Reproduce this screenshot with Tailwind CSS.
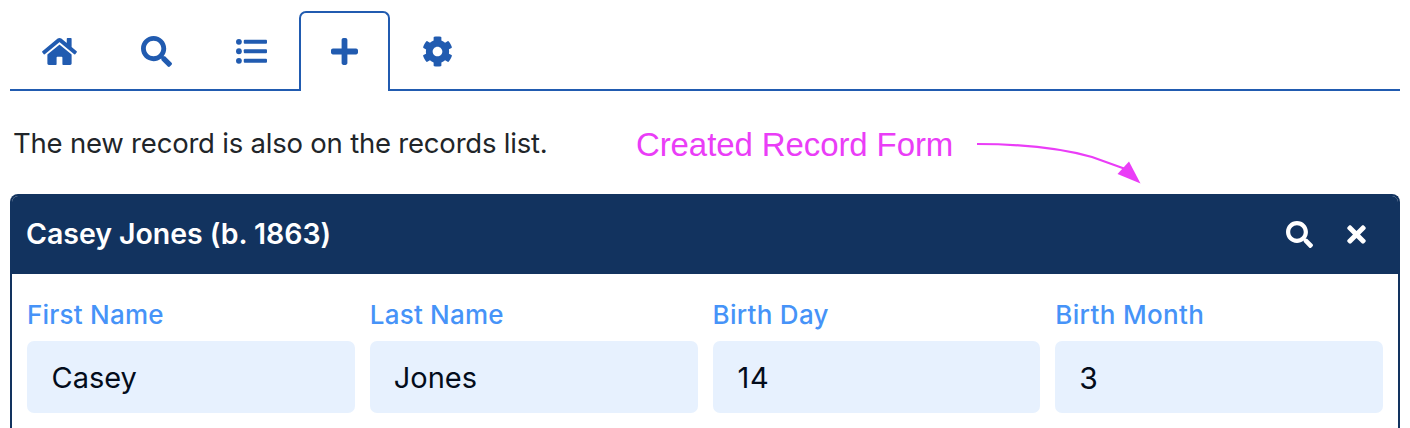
<!DOCTYPE html>
<html lang="en">
<head>
<meta charset="utf-8">
<title>Records</title>
<script src="https://cdn.jsdelivr.net/npm/@tailwindcss/browser@4"></script>
</head>
<body class="relative h-[428px] overflow-hidden bg-white px-[10px] pt-[11px] font-['Inter',sans-serif]">
<nav class="flex h-20 text-[#215bb0]">
  <a class="flex items-center border-b-2 border-current px-8 pt-[2px]"><svg class="h-[31px] w-[35px]" viewBox="0 0 576 512" fill="currentColor"><path d="M488 312.7V456c0 13.3-10.7 24-24 24H348c-6.6 0-12-5.4-12-12V356c0-6.6-5.4-12-12-12h-72c-6.6 0-12 5.4-12 12v112c0 6.6-5.4 12-12 12H112c-13.3 0-24-10.7-24-24V312.7c0-3.6 1.6-7 4.400-9.300l188-154.800c4.400-3.600 10.800-3.600 15.300 0l188 154.800c2.700 2.300 4.300 5.700 4.300 9.300zm83.600-60.900L488 182.900V44.400c0-6.600-5.400-12-12-12h-56c-6.600 0-12 5.400-12 12V117l-89.500-73.700c-17.700-14.600-43.300-14.600-61 0L4.400 251.800c-5.100 4.200-5.800 11.800-1.600 16.900l25.500 31c4.200 5.100 11.800 5.800 16.900 1.600l235.200-193.700c4.400-3.600 10.800-3.600 15.300 0l235.200 193.700c5.100 4.200 12.700 3.500 16.900-1.600l25.500-31c4.200-5.200 3.400-12.700-1.700-16.900z"/></svg></a>
  <a class="flex items-center border-b-2 border-current px-8 pt-[2px]"><svg class="size-[31px]" viewBox="0 0 512 512" fill="currentColor"><path d="M505 442.7L405.3 343c-4.5-4.5-10.6-7-17-7H372c27.6-35.3 44-79.7 44-128C416 93.1 322.9 0 208 0S0 93.1 0 208s93.1 208 208 208c48.3 0 92.7-16.4 128-44v16.3c0 6.4 2.5 12.5 7 17l99.7 99.7c9.4 9.4 24.6 9.4 33.9 0l28.3-28.3c9.4-9.4 9.4-24.6.1-34zM208 336c-70.7 0-128-57.2-128-128 0-70.7 57.2-128 128-128 70.7 0 128 57.2 128 128 0 70.7-57.2 128-128 128z"/></svg></a>
  <a class="flex items-center border-b-2 border-current px-8 pt-[2px]"><svg class="size-[31px]" viewBox="0 0 512 512" fill="currentColor"><circle cx="48" cy="96" r="48"/><circle cx="48" cy="252" r="48"/><circle cx="48" cy="410" r="48"/><rect x="128" y="63" width="384" height="66" rx="16"/><rect x="128" y="219" width="384" height="66" rx="16"/><rect x="128" y="377" width="384" height="66" rx="16"/></svg></a>
  <a class="flex items-center rounded-t-[7px] border-2 border-b-0 border-current px-[30px] pb-[2px]"><svg class="h-[31px] w-[27px]" viewBox="0 0 448 512" fill="currentColor"><path d="M416 208H272V64c0-17.67-14.33-32-32-32h-32c-17.67 0-32 14.33-32 32v144H32c-17.67 0-32 14.33-32 32v32c0 17.67 14.33 32 32 32h144v144c0 17.67 14.33 32 32 32h32c17.67 0 32-14.33 32-32V304h144c17.67 0 32-14.33 32-32v-32c0-17.67-14.33-32-32-32z"/></svg></a>
  <a class="flex grow items-center border-b-2 border-current px-8 pt-[2px]"><svg class="size-[31px]" viewBox="0 0 512 512" fill="currentColor"><path d="M487.400 315.700l-42.600-24.600c4.300-23.200 4.300-47 0-70.200l42.600-24.600c4.900-2.800 7.100-8.600 5.500-14-11.100-35.600-30-67.800-54.700-94.600-3.800-4.100-10-5.100-14.800-2.300L380.800 110c-17.900-15.400-38.500-27.300-60.800-35.100V25.800c0-5.600-3.900-10.500-9.400-11.700-36.700-8.200-74.300-7.800-109.200 0-5.500 1.200-9.400 6.100-9.400 11.700V75c-22.200 7.900-42.800 19.800-60.800 35.100L88.700 85.500c-4.900-2.800-11-1.900-14.800 2.300-24.700 26.700-43.600 58.900-54.700 94.600-1.700 5.400.6 11.200 5.500 14L67.300 221c-4.300 23.200-4.300 47 0 70.200l-42.600 24.600c-4.900 2.800-7.100 8.600-5.500 14 11.100 35.600 30 67.800 54.700 94.600 3.800 4.100 10 5.100 14.800 2.300l42.600-24.600c17.900 15.400 38.500 27.300 60.800 35.100v49.200c0 5.600 3.900 10.500 9.400 11.700 36.700 8.200 74.300 7.800 109.200 0 5.500-1.200 9.400-6.100 9.400-11.700v-49.200c22.200-7.900 42.800-19.800 60.800-35.100l42.600 24.600c4.900 2.800 11 1.900 14.800-2.300 24.700-26.700 43.600-58.900 54.700-94.600 1.500-5.500-.7-11.300-5.600-14.100zM256 336c-44.100 0-80-35.900-80-80s35.900-80 80-80 80 35.900 80 80-35.900 80-80 80z"/></svg></a>
</nav>
<p class="flex h-[103px] items-center pt-[2px] pl-[3px] text-[27.500px] tracking-[-0.21px] whitespace-nowrap text-[#212529]"><span>The new record is also on the records list.</span></p>
<section class="h-[234px] overflow-hidden rounded-t-lg border-2 border-b-0 border-[#12335f]">
  <header class="flex h-[78px] items-center bg-[#12335f] pr-[32px] pb-[2px] pl-[14px] text-white">
    <h1 class="grow text-[28.500px] font-semibold tracking-[-0.04px]"><span>Casey Jones (b. 1863)</span></h1>
    <svg class="mr-[34px] size-[27px]" viewBox="0 0 512 512" fill="currentColor"><path d="M505 442.7L405.3 343c-4.5-4.5-10.6-7-17-7H372c27.6-35.3 44-79.7 44-128C416 93.1 322.9 0 208 0S0 93.1 0 208s93.1 208 208 208c48.3 0 92.7-16.4 128-44v16.300c0 6.400 2.500 12.500 7 17l99.700 99.700c9.400 9.400 24.600 9.400 33.900 0l28.300-28.300c9.400-9.400 9.400-24.600.1-34zM208 336c-70.700 0-128-57.200-128-128 0-70.700 57.200-128 128-128 70.700 0 128 57.200 128 128 0 70.700-57.200 128-128 128z"/></svg>
    <svg class="h-[27px] w-[19px]" viewBox="0 0 352 512" fill="currentColor"><path d="M242.72 256l100.07-100.07c12.28-12.28 12.28-32.19 0-44.48l-22.24-22.24c-12.28-12.28-32.19-12.28-44.48 0L176 189.28 75.93 89.21c-12.28-12.28-32.19-12.28-44.48 0L9.21 111.45c-12.28 12.28-12.28 32.19 0 44.48L109.28 256 9.21 356.07c-12.28 12.28-12.28 32.19 0 44.48l22.24 22.24c12.28 12.28 32.2 12.28 44.48 0L176 322.72l100.07 100.07c12.28 12.28 32.2 12.28 44.48 0l22.24-22.24c12.28-12.28 12.28-32.19 0-44.48L242.72 256z"/></svg>
  </header>
  <div class="grid grid-cols-4 gap-[15px] px-[15px] pt-[21px]">
    <div><div class="h-[46px] text-[26px] leading-[40px] font-medium tracking-[0.22px] text-[#4693f8]"><span>First Name</span></div><div class="h-[72px] rounded-[7px] bg-[#e7f1fe] pl-[24.500px] text-[29px] leading-[74px] text-[#030c1b]"><span>Casey</span></div></div>
    <div><div class="h-[46px] text-[26px] leading-[40px] font-medium tracking-[0.22px] text-[#4693f8]"><span>Last Name</span></div><div class="h-[72px] rounded-[7px] bg-[#e7f1fe] pl-6 text-[29px] leading-[74px] text-[#030c1b]"><span>Jones</span></div></div>
    <div><div class="h-[46px] text-[26px] leading-[40px] font-medium tracking-[0.3px] text-[#4693f8]"><span>Birth Day</span></div><div class="h-[72px] rounded-[7px] bg-[#e7f1fe] pl-[25px] text-[29px] leading-[74px] tracking-[0.8px] text-[#030c1b]"><span>14</span></div></div>
    <div><div class="h-[46px] text-[26px] leading-[40px] font-medium tracking-[0.35px] text-[#4693f8]"><span>Birth Month</span></div><div class="h-[72px] rounded-[7px] bg-[#e7f1fe] pl-6 text-[30px] leading-[74px] text-[#030c1b]"><span>3</span></div></div>
  </div>
</section>
<!-- Callout laid over the page -->
<span class="absolute top-[125px] left-[636px] font-['Liberation_Sans',sans-serif] text-[33px] leading-[40px] tracking-[-0.1px] whitespace-nowrap text-[#ea3df7]">Created Record Form</span>
<svg class="absolute top-[136px] left-[970px] h-[54px] w-[180px]" viewBox="970 136 180 54"><path d="M977 144Q1046 144 1092 157L1124 168.500" fill="none" stroke="#ea3df7" stroke-width="2.200"/><path d="M1129 161.500L1117.500 174L1140.500 183.500Z" fill="#ea3df7"/></svg>
</body>
</html>
